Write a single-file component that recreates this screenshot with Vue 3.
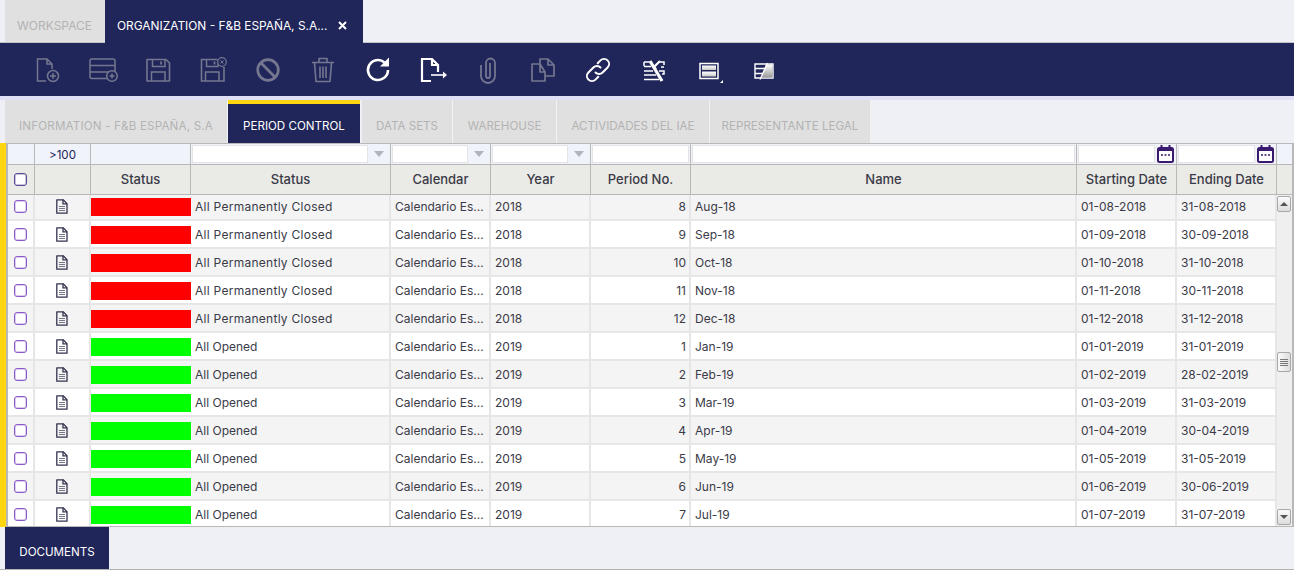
<template>
  <div class="page">
    <div class="top-tabs">
      <div class="tab off">WORKSPACE</div>
      <div class="tab on main">
        <span>ORGANIZATION - F&amp;B ESPAÑA, S.A...</span>
        <svg class="close" width="9" height="9" viewBox="0 0 9 9"><path d="M1 1l7 7M8 1L1 8" stroke="#fff" stroke-width="2"/></svg>
      </div>
    </div>

    <div class="toolbar">
      <button v-for="b in tools" :key="b.name" class="tool" :class="{ dim: b.dim }" :title="b.name">
        <svg width="32" height="32" viewBox="0 0 32 32" fill="none" stroke="currentColor" v-html="b.svg"></svg>
      </button>
    </div>

    <div class="sub-tabs">
      <div v-for="t in subTabs" :key="t.label" class="sub" :class="{ active: t.active }" :style="{ width: t.w + 'px' }">{{ t.label }}</div>
    </div>

    <div class="grid-wrap">
      <div class="grid">
        <div class="row filter">
          <div class="c"></div>
          <div class="c count">&gt;100</div>
          <div class="c"></div>
          <div class="c fcell"><i class="inp"></i><b class="arrow"></b></div>
          <div class="c fcell"><i class="inp"></i><b class="arrow"></b></div>
          <div class="c fcell"><i class="inp"></i><b class="arrow"></b></div>
          <div class="c fcell"><i class="inp"></i></div>
          <div class="c fcell"><i class="inp"></i></div>
          <div class="c fcell"><i class="inp"></i><svg class="cal" width="17" height="18" viewBox="0 0 17 18"><path d="M4.5 0v3M12.5 0v3" stroke="#3a1a6e" stroke-width="2"/><rect x="1" y="3" width="15" height="14" rx="1.5" fill="#fff" stroke="#3a1a6e" stroke-width="2"/><path d="M1 3h15v3H1z" fill="#3a1a6e"/><path d="M4 10h2M7.5 10h2M11 10h2" stroke="#3a1a6e" stroke-width="1.4"/></svg></div>
          <div class="c fcell"><i class="inp"></i><svg class="cal" width="17" height="18" viewBox="0 0 17 18"><path d="M4.5 0v3M12.5 0v3" stroke="#3a1a6e" stroke-width="2"/><rect x="1" y="3" width="15" height="14" rx="1.5" fill="#fff" stroke="#3a1a6e" stroke-width="2"/><path d="M1 3h15v3H1z" fill="#3a1a6e"/><path d="M4 10h2M7.5 10h2M11 10h2" stroke="#3a1a6e" stroke-width="1.4"/></svg></div>
          <div class="c"></div>
        </div>
        <div class="row head">
          <div class="c chk"><i class="check dark"></i></div>
          <div class="c"></div>
          <div class="c">Status</div>
          <div class="c">Status</div>
          <div class="c">Calendar</div>
          <div class="c">Year</div>
          <div class="c">Period No.</div>
          <div class="c">Name</div>
          <div class="c">Starting Date</div>
          <div class="c">Ending Date</div>
          <div class="c"></div>
        </div>
        <div class="body">
          <div class="rows">
            <div v-for="(r, i) in rows" :key="i" class="row data" :class="{ odd: i % 2 === 0 }">
              <div class="c chk"><i class="check"></i></div>
              <div class="c">
                <svg class="doc" width="12" height="15" viewBox="0 0 12 15" fill="none" stroke="#33334f" stroke-width="1.3"><path d="M.8.8h6.400l3.800 3.800v9.600H.8z" stroke-linejoin="round"/><path d="M7 .8v4h4"/><path d="M3 7.500h6M3 9.500h6M3 11.500h6" stroke="#77778a" stroke-width="1.100"/></svg>
              </div>
              <div class="c bar"><i :class="r.closed ? 'red' : 'green'"></i></div>
              <div class="c txt" :class="{ wide: r.closed }">{{ r.closed ? 'All Permanently Closed' : 'All Opened' }}</div>
              <div class="c txt">Calendario Es...</div>
              <div class="c txt">{{ r.year }}</div>
              <div class="c txt num">{{ r.no }}</div>
              <div class="c txt">{{ r.name }}</div>
              <div class="c txt">{{ r.start }}</div>
              <div class="c txt">{{ r.end }}</div>
            </div>
          </div>
          <div class="scroll">
            <div class="sbtn"><b class="up"></b></div>
            <div class="track">
              <div class="thumb"><i></i><i></i><i></i><i></i></div>
            </div>
            <div class="sbtn"><b class="down"></b></div>
          </div>
        </div>
      </div>
    </div>

    <div class="bottom">
      <div class="doc-tab">DOCUMENTS</div>
    </div>
  </div>
</template>

<script setup>
const tools = [
  { name: 'new', dim: true, svg: '<path stroke-width="1.500" d="M14 27H5.500V5H15l5 5v5M15 5v5h5"/><circle cx="21" cy="22" r="5.500" stroke-width="1.500"/><path stroke-width="1.500" d="M18 22h6M21 19v6"/>' },
  { name: 'new record', dim: true, svg: '<rect x="3" y="5" width="25" height="19.500" rx="2" stroke-width="1.500"/><path stroke-width="1.500" d="M3 11.500h25M3 18h25"/><circle cx="25" cy="22" r="5.300" fill="#20255a" stroke-width="1.500"/><path stroke-width="1.500" d="M22.500 22h5M25 19.500v5"/>' },
  { name: 'save', dim: true, svg: '<path stroke-width="1.600" d="M5 5.500h19l3.500 3.500v18H5z" stroke-linejoin="round"/><path stroke-width="1.500" d="M10.500 5.500v7H23v-7M9.500 27v-9H23v9"/><path stroke-width="1.800" d="M19 7.500v3"/>' },
  { name: 'save close', dim: true, svg: '<path stroke-width="1.600" d="M20 5.500H4.500V27H27V13"/><path stroke-width="1.500" d="M9.500 5.500v7H21v-7M8.500 27v-9H22v9"/><path stroke-width="1.800" d="M17.500 7.500v3"/><circle cx="25" cy="8" r="4.300" fill="#20255a" stroke-width="1.200"/><path stroke-width="1" d="M23.500 6.500l3 3M26.500 6.500l-3 3"/>' },
  { name: 'cancel', dim: true, svg: '<circle cx="16" cy="16" r="10.300" stroke-width="2.700"/><path stroke-width="2.700" d="M8.800 8.800l14.400 14.400"/>' },
  { name: 'delete', dim: true, svg: '<path stroke-width="1.600" d="M5 8.500h22M12 8.500V4.500h8v4M7.500 8.500L9 27.500h14l1.500-19M13 12.500v11.500M16 12.500v11.500M19 12.500v11.500" stroke-linejoin="round"/>' },
  { name: 'refresh', svg: '<path stroke-width="2.600" d="M26 16a10 10 0 1 1-3.500-7.600"/><path fill="currentColor" stroke="none" d="M27 3.500v9h-9z"/>' },
  { name: 'export', svg: '<path stroke-width="2.200" d="M14 27H5V5h10l6 6v7M15 5v6h6"/><path stroke-width="1.600" d="M14 21h14"/><path fill="currentColor" stroke="none" d="M26 17.500l4 3.500-4 3.500z"/>' },
  { name: 'attach', dim: true, svg: '<path stroke-width="1.800" d="M9 11v11a7 7 0 0 0 14 0V9a4.500 4.500 0 0 0-9 0v13a2 2 0 0 0 4 0V9"/>' },
  { name: 'copy', dim: true, svg: '<path stroke-width="1.700" d="M13 10H5v17h13v-9l-5-8zM13 10v8h5M13 10V5h8l6 6v11h-9M21 5v6h6" stroke-linejoin="round"/>' },
  { name: 'link', svg: '<path stroke-width="2" stroke-linecap="round" d="M13.500 18.500a5 5 0 0 0 7.100 0l5-5a5 5 0 0 0-7.100-7.100l-2.800 2.800M18.500 13.500a5 5 0 0 0-7.100 0l-5 5a5 5 0 0 0 7.100 7.100l2.800-2.800"/>' },
  { name: 'tools', svg: '<path stroke-width="1.500" d="M7 8h5M7 12.500h7M7 17h9M7 21h12M7 25.500h15M21 8h6v3M24 13h3M22 17h5v3H25M7 8v4"/><path stroke-width="3.200" d="M13 7l12 20"/><path stroke-width="2.200" d="M23 7l-6 6 2 2"/>' },
  { name: 'layout', svg: '<defs><linearGradient id="pg" x1="0" y1="0" x2="0" y2="1"><stop offset="0" stop-color="#fff"/><stop offset="1" stop-color="#c8c8c8"/></linearGradient></defs><rect x="8" y="9.500" width="18" height="15" stroke-width="1.500"/><rect x="10" y="11.500" width="14" height="4.500" fill="url(#pg)" stroke="none"/><rect x="10" y="17.500" width="14" height="5" fill="url(#pg)" stroke="none"/><path fill="currentColor" stroke="none" d="M31 26v3h-3z"/>' },
  { name: 'audit', svg: '<defs><linearGradient id="ag" x1="0" y1="0" x2="0" y2="1"><stop offset="0" stop-color="#fff"/><stop offset="1" stop-color="#9a9a9a"/></linearGradient></defs><path stroke-width="1.400" d="M8 10h18v14H8zM8 14.500h10M8 19.500h8"/><path fill="url(#ag)" stroke="none" d="M19 10.500h6.500v13H14z"/><path stroke-width="1.300" d="M20.500 9L13 25.500"/>' }
]

const subTabs = [
  { label: 'INFORMATION - F&B ESPAÑA, S.A', w: 223 },
  { label: 'PERIOD CONTROL', w: 132, active: true },
  { label: 'DATA SETS', w: 91 },
  { label: 'WAREHOUSE', w: 104 },
  { label: 'ACTIVIDADES DEL IAE', w: 153 },
  { label: 'REPRESENTANTE LEGAL', w: 161 }
]

const months = ['Jan', 'Feb', 'Mar', 'Apr', 'May', 'Jun', 'Jul', 'Aug', 'Sep', 'Oct', 'Nov', 'Dec']
const lastDay = [31, 28, 31, 30, 31, 30, 31, 31, 30, 31, 30, 31]
const pad = n => String(n).padStart(2, '0')

function period(year, no) {
  const m = pad(no)
  return {
    closed: year === 2018,
    year,
    no,
    name: months[no - 1] + '-' + String(year).slice(2),
    start: `01-${m}-${year}`,
    end: `${lastDay[no - 1]}-${m}-${year}`
  }
}

const rows = [8, 9, 10, 11, 12].map(n => period(2018, n)).concat([1, 2, 3, 4, 5, 6, 7].map(n => period(2019, n)))
</script>

<style>
html, body { margin: 0; background: #eff0f6; }
</style>

<style scoped>
.page {
  width: 1294px;
  height: 570px;
  overflow: hidden;
  background: #eff0f6;
  font-family: Inter, "Open Sans", "Liberation Sans", sans-serif;
  display: flex;
  flex-direction: column;
  box-sizing: border-box;
  border-bottom: 1px solid #b4b4b4;
  color: #33334f;
}
.top-tabs { display: flex; height: 42px; padding-left: 5px; flex: none; }
.tab { display: flex; align-items: center; font-size: 12px; box-sizing: border-box; height: 43px; padding-top: 7px; }
.tab.off { width: 100px; background: #e0e0e0; color: #b3b3b3; padding-left: 12px; }
.tab.on { width: 258px; background: #20255a; color: #fff; padding: 7px 16px 0 12px; justify-content: space-between; font-size: 11.9px; }
.toolbar {
  flex: none;
  height: 54px;
  box-sizing: border-box;
  border-top: 1px solid #c4c4c8;
  background: #20255a;
  display: flex;
  align-items: center;
  padding: 0 0 0 20px;
}
.tab.main { position: relative; z-index: 1; }
.tool { width: 55px; height: 40px; padding: 0; background: none; border: 0; color: #fff; display: flex; align-items: center; justify-content: center; }
.tool.dim { color: #74778f; }
.sub-tabs {
  flex: none;
  height: 47px;
  box-sizing: border-box;
  border-top: 4px solid #dfe0f5;
  padding-left: 5px;
  display: flex;
}
.sub {
  background: #e0e0e0;
  color: #b3b3b3;
  font-size: 11.6px;
  display: flex;
  align-items: center;
  justify-content: center;
  box-sizing: border-box;
  border-right: 1px solid #f2f2f2;
  padding-top: 8px;
}
.sub:first-child { letter-spacing: .18px; }
.sub.active {
  background: #20255a;
  color: #fff;
  border-top: 4px solid #ffd60f;
  border-right: 0;
  padding-top: 4px;
  margin-right: 2px;
}
.grid-wrap {
  flex: none;
  height: 384px;
  background: #ffd60f;
  padding-left: 6px;
}
.grid {
  height: 100%;
  box-sizing: border-box;
  background: #fff;
  border: 1px solid #b8b8b8;
  border-right-width: 2px;
  border-left-width: 2px;
  display: flex;
  flex-direction: column;
  overflow: hidden;
}
.row {
  display: grid;
  grid-template-columns: 27px 56px 100px 200px 100px 100px 100px 386px 100px 100px 15px;
}
.c {
  box-sizing: border-box;
  border-right: 2px solid #e6e6e6;
  display: flex;
  align-items: center;
  justify-content: center;
  font-size: 12px;
  min-width: 0;
}
.filter { height: 21px; background: #f0f4fa; flex: none; border-bottom: 1px solid #b8b8b8; box-sizing: border-box; }
.filter .c { border-right: 1px solid #b8b8b8; }
.filter .c:last-child { border-right: 0; }
.count { color: #20255a; font-size: 11.6px; padding-top: 2px; }
.fcell { padding: 1px; justify-content: flex-start; }
.inp { flex: 1; align-self: stretch; background: #fff; border: 1px solid #e4e4e4; min-width: 0; }
.arrow { width: 21px; flex: none; display: flex; justify-content: center; }
.arrow::after { content: ""; border: 5px solid transparent; border-top: 6px solid #b0b4bc; border-bottom: 0; }
.cal { flex: none; margin: 0 1px 0 2px; }
.head { height: 30px; background: #eaebe6; flex: none; border-bottom: 1px solid #b8b8b8; box-sizing: border-box; }
.head .c { border-right: 1px solid #b8b8b8; font-size: 13px; color: #3a3a48; font-weight: 500; padding-bottom: 1px; }
.head .c:last-child { border-right: 0; }
.head .chk { padding-right: 1px; }
.check { display: block; width: 11px; height: 11px; border: 1px solid #8a5cc8; box-shadow: inset 0 0 0 1px #dccdf0; border-radius: 3px; background: #fff; }
.check.dark { border-color: #5c4a96; box-shadow: inset 0 0 0 1px #c9c3dd; }
.doc { margin-top: 1px; }
.body { flex: 1; display: flex; overflow: hidden; min-height: 0; }
.rows { flex: none; width: 1269px; margin-top: -2px; }
.data { height: 28px; box-sizing: border-box; border-bottom: 2px solid #e6e6e6; background: #fff; grid-template-columns: 27px 56px 100px 200px 100px 100px 100px 386px 100px 100px; }
.data.odd { background: #f4f4f4; }
.txt { justify-content: flex-start; padding-left: 4px; white-space: nowrap; overflow: hidden; color: #3a3a48; font-size: 12px; }
.txt.wide { letter-spacing: .27px; }
.txt.num { justify-content: flex-end; padding-right: 3px; padding-left: 0; }
.bar { align-items: flex-start; padding: 5px 0 0 0; border-right: 0; }
.bar i { display: block; width: 100%; height: 18px; }
.red { background: #ff0000; }
.green { background: #00ff00; }
.scroll { flex: 1; display: flex; flex-direction: column; background: #efefef; padding: 1px 0; min-width: 0; }
.sbtn {
  flex: none;
  height: 16px;
  width: 14px;
  box-sizing: border-box;
  border: 1px solid #a8a8a8;
  border-radius: 2px;
  background: linear-gradient(#fbfbfb, #dcdcdc);
  display: flex;
  align-items: center;
  justify-content: center;
}
.up { border: 4px solid transparent; border-bottom: 4px solid #555; border-top: 0; }
.down { border: 4px solid transparent; border-top: 4px solid #555; border-bottom: 0; }
.track { flex: 1; padding-top: 140px; }
.thumb {
  width: 14px;
  height: 20px;
  box-sizing: border-box;
  border: 1px solid #a8a8a8;
  border-radius: 2px;
  background: linear-gradient(90deg, #fbfbfb, #dcdcdc);
  display: flex;
  flex-direction: column;
  align-items: center;
  justify-content: center;
  gap: 1px;
}
.thumb i { display: block; width: 8px; height: 1px; background: #777; }
.bottom { flex: 1; padding-left: 5px; min-height: 0; }
.doc-tab {
  width: 104px;
  height: 100%;
  box-sizing: border-box;
  padding-top: 8px;
  background: #20255a;
  color: #fff;
  font-size: 11.6px;
  display: flex;
  align-items: center;
  justify-content: center;
}
</style>
